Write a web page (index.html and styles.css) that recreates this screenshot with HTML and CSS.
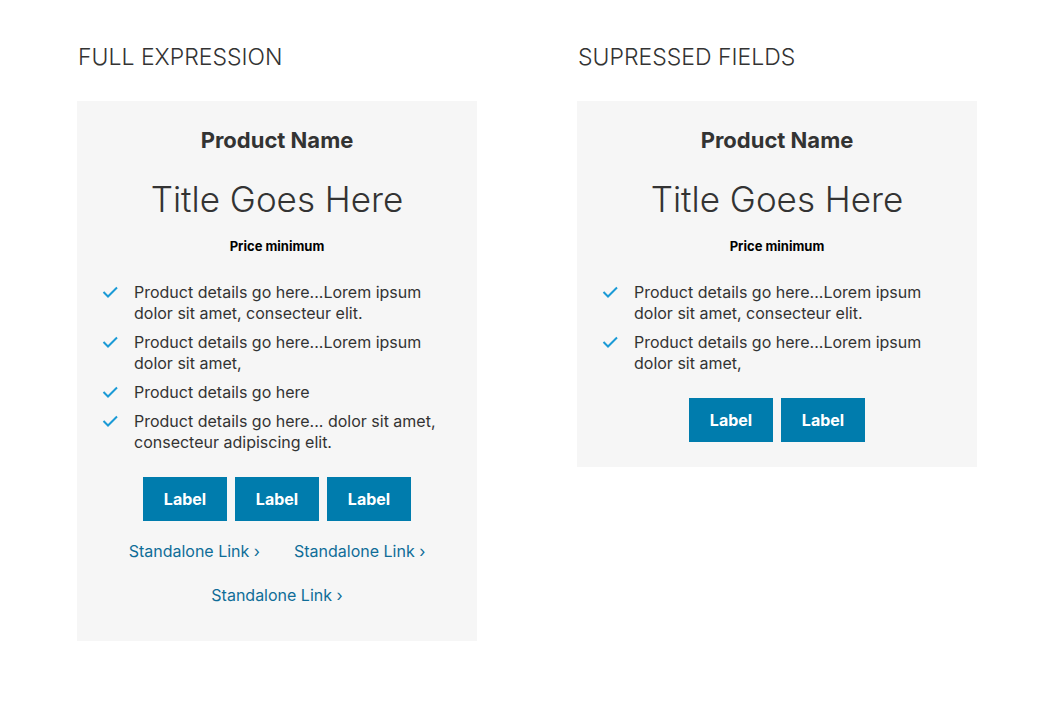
FILE: index.html
```html
<!DOCTYPE html>
<html>
<head>
<meta charset="utf-8">
<link rel="stylesheet" href="styles.css">
</head>
<body>
<div class="page">
  <section class="col">
    <h2 class="section-title">FULL EXPRESSION</h2>
    <div class="card card-full">
      <div class="product">Product Name</div>
      <div class="title">Title Goes Here</div>
      <div class="price">Price minimum</div>
      <ul class="list">
        <li><svg class="check" viewBox="0 0 16 16"><path d="M1.5 8 L6 12.5 L15 3.5" /></svg><span>Product details go here...Lorem ipsum dolor sit amet, consecteur elit.</span></li>
        <li><svg class="check" viewBox="0 0 16 16"><path d="M1.5 8 L6 12.5 L15 3.5" /></svg><span>Product details go here...Lorem ipsum dolor sit amet,</span></li>
        <li><svg class="check" viewBox="0 0 16 16"><path d="M1.5 8 L6 12.5 L15 3.5" /></svg><span>Product details go here</span></li>
        <li><svg class="check" viewBox="0 0 16 16"><path d="M1.5 8 L6 12.5 L15 3.5" /></svg><span>Product details go here... dolor sit amet, consecteur adipiscing elit.</span></li>
      </ul>
      <div class="buttons">
        <button class="btn">Label</button>
        <button class="btn">Label</button>
        <button class="btn">Label</button>
      </div>
      <div class="links">
        <a class="link" href="#">Standalone Link <span class="chev">›</span></a>
        <a class="link" href="#">Standalone Link <span class="chev">›</span></a>
        <a class="link" href="#">Standalone Link <span class="chev">›</span></a>
      </div>
    </div>
  </section>
  <section class="col">
    <h2 class="section-title">SUPRESSED FIELDS</h2>
    <div class="card card-short">
      <div class="product">Product Name</div>
      <div class="title">Title Goes Here</div>
      <div class="price">Price minimum</div>
      <ul class="list">
        <li><svg class="check" viewBox="0 0 16 16"><path d="M1.5 8 L6 12.5 L15 3.5" /></svg><span>Product details go here...Lorem ipsum dolor sit amet, consecteur elit.</span></li>
        <li><svg class="check" viewBox="0 0 16 16"><path d="M1.5 8 L6 12.5 L15 3.5" /></svg><span>Product details go here...Lorem ipsum dolor sit amet,</span></li>
      </ul>
      <div class="buttons">
        <button class="btn">Label</button>
        <button class="btn">Label</button>
      </div>
    </div>
  </section>
</div>
</body>
</html>
```
FILE: styles.css
```css
html, body {
  margin: 0;
  padding: 0;
  background: #ffffff;
}
body {
  font-family: Inter, "Noto Sans", sans-serif;
  color: #333333;
}
.page {
  display: flex;
  gap: 100px;
  padding: 43px 0 0 77px;
}
.col {
  width: 400px;
}
.section-title {
  margin: 0 0 0 1px;
  font-size: 23px;
  font-weight: 300;
  line-height: 28px;
  color: #333;
  letter-spacing: 0;
}
.card {
  margin-top: 30px;
  background: #f6f6f6;
  padding: 24px;
  display: flex;
  flex-direction: column;
  align-items: center;
}
.card-full {
  padding-bottom: 34px;
}
.card-short {
  padding-bottom: 25px;
}
.product {
  font-size: 22px;
  font-weight: 700;
  line-height: 30px;
  color: #333;
}
.title {
  margin-top: 24px;
  font-size: 35px;
  font-weight: 300;
  line-height: 40px;
  color: #333;
}
.price {
  margin-top: 18px;
  font-size: 13px;
  font-weight: 700;
  line-height: 18px;
  color: #000;
}
.list {
  list-style: none;
  margin: 27px 0 0 1px;
  padding: 0;
  align-self: stretch;
}
.list li {
  display: flex;
  align-items: flex-start;
  gap: 16px;
  font-size: 16px;
  line-height: 21px;
  margin-bottom: 8px;
}
.list li:last-child {
  margin-bottom: 0;
}
.list span {
  width: 325px;
}
.check {
  width: 16px;
  height: 16px;
  flex: none;
  margin-top: 2px;
  fill: none;
  stroke: #1a9ad6;
  stroke-width: 2;
}
.buttons {
  display: flex;
  gap: 8px;
  margin-top: 24px;
}
.btn {
  width: 84px;
  height: 44px;
  border: none;
  background: #007cad;
  color: #fff;
  font-family: inherit;
  font-size: 16px;
  font-weight: 700;
  padding: 0;
}
.links {
  display: flex;
  flex-wrap: wrap;
  justify-content: center;
  column-gap: 34px;
  row-gap: 20px;
  margin-top: 18px;
  width: 320px;
}
.link {
  color: #0f6d98;
  text-decoration: none;
  font-size: 16px;
  line-height: 24px;
}
.chev {
  font-size: 16px;
}
```
